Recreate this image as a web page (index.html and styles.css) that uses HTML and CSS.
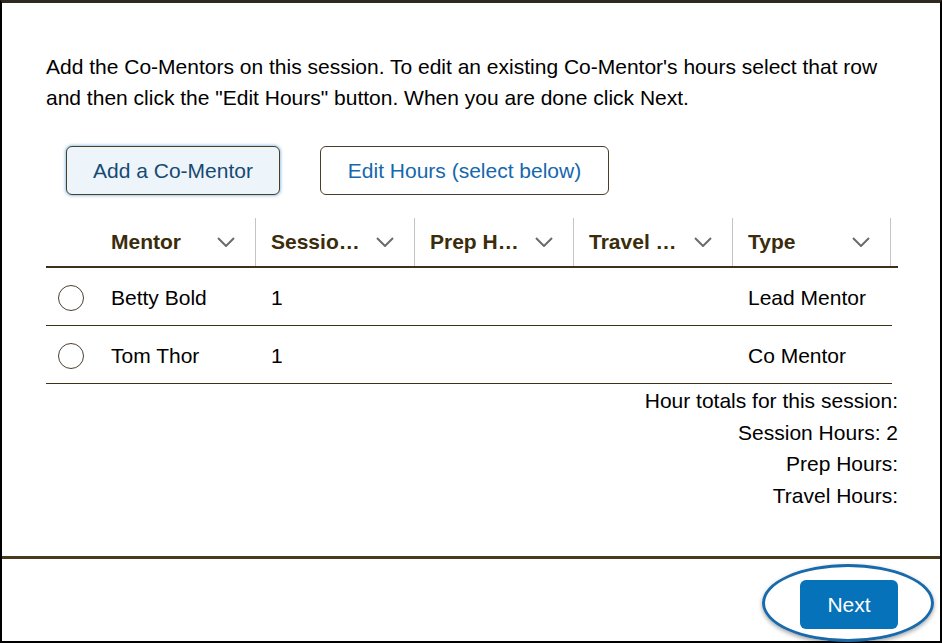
FILE: index.html
```html
<!DOCTYPE html>
<html>
<head>
<meta charset="utf-8">
<link rel="stylesheet" href="styles.css">
</head>
<body>
<div class="frame">
  <div class="content">
    <p class="intro">Add the Co-Mentors on this session. To edit an existing Co-Mentor's hours select that row and then click the "Edit Hours" button. When you are done click Next.</p>
    <div class="actions">
      <button class="btn btn-add">Add a Co-Mentor</button>
      <button class="btn btn-edit">Edit Hours (select below)</button>
    </div>
    <div class="grid">
      <div class="head">
        <div class="hcell hcell-radio"></div>
        <div class="hcell"><span>Mentor</span><svg class="chev" viewBox="0 0 18 10"><path d="M1 1l8 8 8-8"/></svg></div>
        <div class="hcell"><span>Sessio…</span><svg class="chev" viewBox="0 0 18 10"><path d="M1 1l8 8 8-8"/></svg></div>
        <div class="hcell"><span>Prep H…</span><svg class="chev" viewBox="0 0 18 10"><path d="M1 1l8 8 8-8"/></svg></div>
        <div class="hcell"><span>Travel …</span><svg class="chev" viewBox="0 0 18 10"><path d="M1 1l8 8 8-8"/></svg></div>
        <div class="hcell"><span>Type</span><svg class="chev" viewBox="0 0 18 10"><path d="M1 1l8 8 8-8"/></svg></div>
      </div>
      <div class="row">
        <div class="cell cell-radio"><span class="radio"></span></div>
        <div class="cell">Betty Bold</div>
        <div class="cell">1</div>
        <div class="cell"></div>
        <div class="cell"></div>
        <div class="cell">Lead Mentor</div>
      </div>
      <div class="row">
        <div class="cell cell-radio"><span class="radio"></span></div>
        <div class="cell">Tom Thor</div>
        <div class="cell">1</div>
        <div class="cell"></div>
        <div class="cell"></div>
        <div class="cell">Co Mentor</div>
      </div>
    </div>
    <div class="totals">
      <div>Hour totals for this session:</div>
      <div>Session Hours: 2</div>
      <div>Prep Hours:</div>
      <div>Travel Hours:</div>
    </div>
  </div>
  <div class="footer">
    <div class="next-wrap">
      <button class="btn-next">Next</button>
      <span class="ring"></span>
    </div>
  </div>
</div>
</body>
</html>
```
FILE: styles.css
```css
* { box-sizing: border-box; }
html, body { margin: 0; padding: 0; background: #fff; }
body {
  font-family: "Liberation Sans", Arial, sans-serif;
  color: #000;
  width: 942px;
  height: 643px;
  overflow: hidden;
}
.frame {
  width: 942px;
  height: 643px;
  border-top: 3px solid #2f2a1f;
  border-left: 2px solid #000;
  border-right: 2px solid #000;
  border-bottom: 2px solid #000;
  display: flex;
  flex-direction: column;
}
.content {
  height: 556px;
  flex: none;
  padding: 48px 43px 0 44px;
  border-bottom: 3px solid #4a3a1c;
}
.intro {
  margin: 0;
  font-size: 21px;
  line-height: 31px;
  width: 852px;
}
.actions {
  display: flex;
  gap: 40px;
  margin-top: 33px;
  padding-left: 20px;
}
.btn {
  font-family: "Liberation Sans", Arial, sans-serif;
  font-size: 21px;
  height: 49px;
  border-radius: 6px;
  border: 1px solid #4a3e2a;
  background: #fff;
  padding: 0;
}
.btn-add {
  width: 214px;
  background: #eef5fa;
  color: #164a74;
  box-shadow: 0 0 3px 1px rgba(70, 150, 210, 0.55);
}
.btn-edit {
  width: 289px;
  color: #1568ad;
}
.grid {
  margin-top: 20px;
  width: 852px;
}
.head, .row {
  display: grid;
  grid-template-columns: 50px 160px 159px 159px 159px 158px;
}
.head {
  height: 53px;
  border-bottom: 2px solid #3d3218;
}
.hcell {
  display: flex;
  align-items: center;
  justify-content: space-between;
  padding: 0 20px 0 15px;
  font-weight: bold;
  font-size: 21px;
  color: #3b2c0c;
  border-right: 1px solid #c4c4c4;
  margin-top: 3px;
  white-space: nowrap;
}
.hcell-radio { border-right: none; }
.chev {
  width: 18px;
  height: 10px;
  fill: none;
  stroke: #6b6b6b;
  stroke-width: 2;
  flex: none;
}
.row {
  height: 58px;
  border-bottom: 1px solid #3d3218;
  width: 846px;
}
.cell {
  display: flex;
  align-items: center;
  padding-left: 15px;
  font-size: 21px;
  padding-top: 2px;
}
.cell-radio { padding-left: 12px; }
.radio {
  width: 26px;
  height: 26px;
  border-radius: 50%;
  border: 1.5px solid #4a4030;
  background: #fff;
}
.totals {
  text-align: right;
  font-size: 21px;
  line-height: 31.5px;
  width: 852px;
  padding-top: 1px;
}
.footer {
  flex: 1;
  display: flex;
  justify-content: flex-end;
  align-items: flex-start;
  padding: 21px 42px 0 0;
}
.next-wrap {
  position: relative;
}
.btn-next {
  width: 98px;
  height: 49px;
  border: none;
  border-radius: 6px;
  background: #0572ba;
  color: #fff;
  font-family: "Liberation Sans", Arial, sans-serif;
  font-size: 21px;
}
.ring {
  position: absolute;
  left: -38px;
  top: -16px;
  width: 172px;
  height: 78px;
  border: 3px solid #1a6aab;
  border-radius: 50%;
  box-shadow: 0 2px 4px rgba(0, 0, 0, 0.35);
  pointer-events: none;
}
```
